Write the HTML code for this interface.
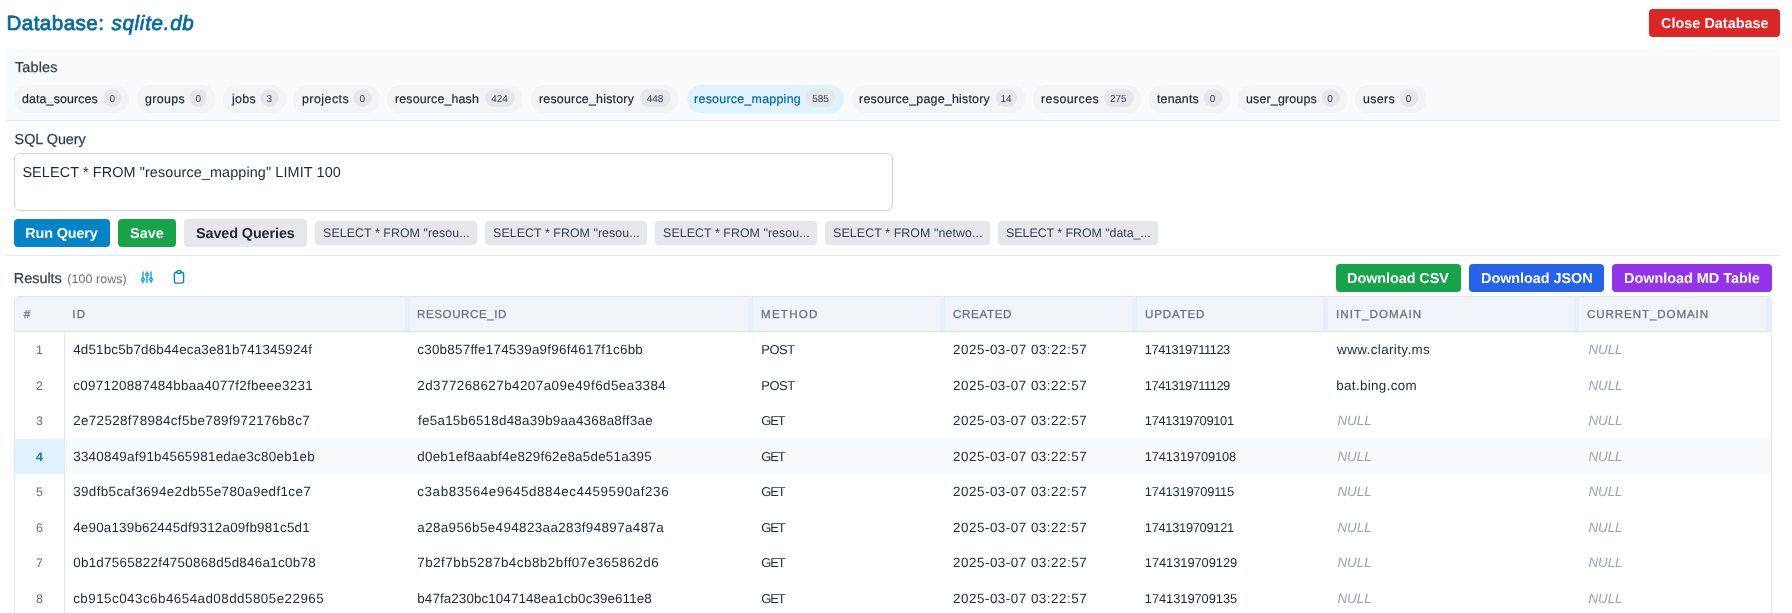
<!DOCTYPE html>
<html lang="en"><head><meta charset="utf-8"><title>Database: sqlite.db</title>
<style>
html,body{margin:0;padding:0;background:#fff}
html{overflow:hidden}
body{width:1792px;height:613px;position:relative;overflow:hidden;font-family:"Liberation Sans",Arial,sans-serif;}
#app{position:absolute;left:0;top:0;width:1792px;height:613px;will-change:transform}
h1,h2,p{margin:0;font-size:inherit;font-weight:inherit}
.t{position:absolute;white-space:pre;line-height:1;display:block;text-rendering:geometricPrecision}
.b{position:absolute;box-sizing:border-box}
.btn{position:absolute;box-sizing:border-box;border-radius:4px}
.chip{position:absolute;box-sizing:border-box;border-radius:14px;background:#f3f4f6}
.chip.on{background:#e0f2fe}
.badge{position:absolute;box-sizing:border-box;border-radius:9px;background:#e5e7eb}
.sv{position:absolute;box-sizing:border-box;border-radius:4px;background:#e5e7eb}
.rz{position:absolute;box-sizing:border-box;background:#e2f1fc;top:0;height:34px;width:5px}
.row{position:absolute;left:0;width:1756px}
.row.sel{background:#f9fafb}
.num{position:absolute;left:0;top:0;width:49px;height:100%}
.row.sel .num{background:#e0f2fe}
svg{position:absolute;overflow:visible}
</style></head><body>
<main id="app">

<header>
<h1><span class="t" id="ttl1" style="left:6.40px;top:14.00px;font-size:20.6px;letter-spacing:0.458px;font-weight:400;-webkit-text-stroke:0.7px #0369a1;color:#0369a1">Database:</span><span class="t" id="ttl2" style="left:111.38px;top:14.00px;font-size:20.6px;letter-spacing:0.714px;font-weight:400;-webkit-text-stroke:0.7px #0369a1;font-style:italic;color:#0369a1">sqlite.db</span></h1>
<div class="btn" style="left:1649px;top:9px;width:131px;height:28px;background:#dc2626"><span class="t" id="close" style="left:12.00px;top:8.01px;font-size:14.4px;letter-spacing:0.032px;font-weight:700;color:#fff">Close Database</span></div>
</header>
<section>
<div class="b" style="left:6px;top:49px;width:1774px;height:72px;background:#f9fafb;border-bottom:1px solid #e5e7eb"><span class="t" id="lbl_tables" style="left:9.00px;top:12.01px;font-size:14.4px;letter-spacing:0.158px;-webkit-text-stroke:0.25px #374151;color:#374151">Tables</span>
<div class="chip" style="left:8px;top:36px;width:115px;height:28px;"><span class="t" id="chip0" style="left:8.00px;top:8.00px;font-size:12.4px;letter-spacing:0.127px;-webkit-text-stroke:0.2px #1f2937;color:#1f2937">data_sources</span><div class="badge" style="left:89px;top:4px;width:18px;height:18px;transform:translateX(0.50px);"><span class="t" id="badge0" style="left:-11.25px;top:6.00px;width:40px;text-align:center;font-size:10px;color:#374151">0</span></div></div>
<div class="chip" style="left:130px;top:36px;width:79px;height:28px;transform:translateX(0.80px);"><span class="t" id="chip1" style="left:8.20px;top:8.00px;font-size:12.4px;letter-spacing:0.382px;-webkit-text-stroke:0.2px #1f2937;color:#1f2937">groups</span><div class="badge" style="left:52.2px;top:4px;width:18px;height:18px;transform:translateX(0.30px);"><span class="t" id="badge1" style="left:-10.90px;top:6.00px;width:40px;text-align:center;font-size:10px;color:#374151">0</span></div></div>
<div class="chip" style="left:217px;top:36px;width:63px;height:28px;"><span class="t" id="chip2" style="left:8.90px;top:8.00px;font-size:12.4px;letter-spacing:0.355px;-webkit-text-stroke:0.2px #1f2937;color:#1f2937">jobs</span><div class="badge" style="left:37px;top:4px;width:18px;height:18px;transform:translateX(0.50px);"><span class="t" id="badge2" style="left:-11.25px;top:6.00px;width:40px;text-align:center;font-size:10px;color:#374151">3</span></div></div>
<div class="chip" style="left:287px;top:36px;width:86.5px;height:28px;"><span class="t" id="chip3" style="left:9.00px;top:8.00px;font-size:12.4px;letter-spacing:0.473px;-webkit-text-stroke:0.2px #1f2937;color:#1f2937">projects</span><div class="badge" style="left:60px;top:4px;width:18px;height:18px;transform:translateX(0.50px);"><span class="t" id="badge3" style="left:-11.25px;top:6.00px;width:40px;text-align:center;font-size:10px;color:#374151">0</span></div></div>
<div class="chip" style="left:380px;top:36px;width:136px;height:28px;transform:translateX(0.50px);"><span class="t" id="chip4" style="left:8.50px;top:8.00px;font-size:12.4px;letter-spacing:0.153px;-webkit-text-stroke:0.2px #1f2937;color:#1f2937">resource_hash</span><div class="badge" style="left:97.5px;top:4px;width:30px;height:18px;transform:translateX(0.50px);"><span class="t" id="badge4" style="left:-5.00px;top:6.00px;width:40px;text-align:center;font-size:10px;color:#374151">424</span></div></div>
<div class="chip" style="left:524px;top:36px;width:148px;height:28px;transform:translateX(0.50px);"><span class="t" id="chip5" style="left:8.50px;top:8.00px;font-size:12.4px;letter-spacing:0.220px;-webkit-text-stroke:0.2px #1f2937;color:#1f2937">resource_history</span><div class="badge" style="left:108.5px;top:4px;width:31px;height:18px;transform:translateX(0.50px);"><span class="t" id="badge5" style="left:-4.50px;top:6.00px;width:40px;text-align:center;font-size:10px;color:#374151">448</span></div></div>
<div class="chip on" style="left:681px;top:36px;width:157px;height:28px;"><span class="t" id="chip6" style="left:7.10px;top:8.00px;font-size:12.4px;letter-spacing:0.264px;-webkit-text-stroke:0.2px #0369a1;color:#0369a1">resource_mapping</span><div class="badge" style="left:118px;top:4px;width:30px;height:18px;transform:translateX(0.50px);"><span class="t" id="badge6" style="left:-5.00px;top:6.00px;width:40px;text-align:center;font-size:10px;color:#374151">585</span></div></div>
<div class="chip" style="left:845px;top:36px;width:174px;height:28px;transform:translateX(0.50px);"><span class="t" id="chip7" style="left:7.60px;top:8.00px;font-size:12.4px;letter-spacing:0.232px;-webkit-text-stroke:0.2px #1f2937;color:#1f2937">resource_page_history</span><div class="badge" style="left:143.5px;top:4px;width:21px;height:18px;transform:translateX(0.50px);"><span class="t" id="badge7" style="left:-9.50px;top:6.00px;width:40px;text-align:center;font-size:10px;color:#374151">14</span></div></div>
<div class="chip" style="left:1026px;top:36px;width:109px;height:28px;transform:translateX(0.50px);"><span class="t" id="chip8" style="left:8.60px;top:8.00px;font-size:12.4px;letter-spacing:0.399px;-webkit-text-stroke:0.2px #1f2937;color:#1f2937">resources</span><div class="badge" style="left:70.5px;top:4px;width:30px;height:18px;transform:translateX(0.50px);"><span class="t" id="badge8" style="left:-5.25px;top:6.00px;width:40px;text-align:center;font-size:10px;color:#374151">275</span></div></div>
<div class="chip" style="left:1142px;top:36px;width:82px;height:28px;transform:translateX(0.50px);"><span class="t" id="chip9" style="left:8.40px;top:8.00px;font-size:12.4px;letter-spacing:0.207px;-webkit-text-stroke:0.2px #1f2937;color:#1f2937">tenants</span><div class="badge" style="left:54.5px;top:4px;width:19px;height:18px;"><span class="t" id="badge9" style="left:-10.50px;top:6.00px;width:40px;text-align:center;font-size:10px;color:#374151">0</span></div></div>
<div class="chip" style="left:1231px;top:36px;width:110px;height:28px;transform:translateX(0.50px);"><span class="t" id="chip10" style="left:8.50px;top:8.00px;font-size:12.4px;letter-spacing:0.181px;-webkit-text-stroke:0.2px #1f2937;color:#1f2937">user_groups</span><div class="badge" style="left:83.5px;top:4px;width:18px;height:18px;"><span class="t" id="badge10" style="left:-11.00px;top:6.00px;width:40px;text-align:center;font-size:10px;color:#374151">0</span></div></div>
<div class="chip" style="left:1348px;top:36px;width:72px;height:28px;transform:translateX(0.50px);"><span class="t" id="chip11" style="left:8.60px;top:8.00px;font-size:12.4px;letter-spacing:0.347px;-webkit-text-stroke:0.2px #1f2937;color:#1f2937">users</span><div class="badge" style="left:44.5px;top:4px;width:19px;height:18px;"><span class="t" id="badge11" style="left:-10.50px;top:6.00px;width:40px;text-align:center;font-size:10px;color:#374151">0</span></div></div></div>
</section>
<section>
<span class="t" id="lbl_sql" style="left:14.60px;top:133.01px;font-size:14.4px;letter-spacing:-0.032px;-webkit-text-stroke:0.25px #374151;color:#374151">SQL Query</span>
<div class="b" style="left:14px;top:153px;width:879px;height:58px;background:#fff;border:1px solid #d1d5db;border-radius:6px"><span class="t" id="ta" style="left:7.40px;top:12.01px;font-size:14.4px;letter-spacing:0.116px;color:#1f2937">SELECT * FROM &quot;resource_mapping&quot; LIMIT 100</span></div>
<div class="btn" style="left:14px;top:219px;width:96px;height:28px;background:#0284c7"><span class="t" id="b_run" style="left:11.20px;top:8.01px;font-size:14.4px;letter-spacing:-0.120px;font-weight:700;color:#fff">Run Query</span></div>
<div class="btn" style="left:118px;top:219px;width:58px;height:28px;background:#16a34a"><span class="t" id="b_save" style="left:12.00px;top:8.01px;font-size:14.4px;letter-spacing:0.064px;font-weight:700;color:#fff">Save</span></div>
<div class="btn" style="left:184px;top:219px;width:123px;height:28px;background:#e5e7eb"><span class="t" id="b_saved" style="left:12.00px;top:8.01px;font-size:14.4px;letter-spacing:-0.100px;font-weight:700;color:#1f2937">Saved Queries</span></div>
<div class="sv" style="left:315px;top:221px;width:162px;height:24px;"><span class="t" id="sv0" style="left:8.10px;top:6.00px;font-size:12.4px;letter-spacing:0.053px;color:#374151">SELECT * FROM &quot;resou...</span></div>
<div class="sv" style="left:485px;top:221px;width:162px;height:24px;"><span class="t" id="sv1" style="left:8.10px;top:6.00px;font-size:12.4px;letter-spacing:0.053px;color:#374151">SELECT * FROM &quot;resou...</span></div>
<div class="sv" style="left:655px;top:221px;width:162px;height:24px;"><span class="t" id="sv2" style="left:8.10px;top:6.00px;font-size:12.4px;letter-spacing:0.053px;color:#374151">SELECT * FROM &quot;resou...</span></div>
<div class="sv" style="left:825px;top:221px;width:165px;height:24px;"><span class="t" id="sv3" style="left:8.10px;top:6.00px;font-size:12.4px;letter-spacing:0.095px;color:#374151">SELECT * FROM &quot;netwo...</span></div>
<div class="sv" style="left:998px;top:221px;width:160px;height:24px;"><span class="t" id="sv4" style="left:8.10px;top:6.00px;font-size:12.4px;letter-spacing:-0.038px;color:#374151">SELECT * FROM &quot;data_...</span></div>
<div class="b" style="left:6px;top:255px;width:1774px;height:1px;background:#e5e7eb"></div>
</section>
<section>
<h2><span class="t" id="res" style="left:13.80px;top:272.01px;font-size:14.4px;letter-spacing:-0.000px;-webkit-text-stroke:0.25px #374151;color:#374151">Results</span><span class="t" id="rows" style="left:67.20px;top:273.00px;font-size:12.4px;letter-spacing:0.108px;color:#6b7280">(100 rows)</span></h2>
<svg style="left:139px;top:269px" width="16" height="16" viewBox="0 0 16 16" fill="none" stroke="#0ea5e9" stroke-width="1.4" stroke-linecap="round"><path d="M4 2.9V13.4M8 2.9V13.4M12 2.9V13.4"/><circle cx="4" cy="10.5" r="1.3" fill="#fff"/><circle cx="8" cy="5.2" r="1.3" fill="#fff"/><circle cx="12" cy="10.5" r="1.3" fill="#fff"/></svg>
<svg style="left:171px;top:269px" width="16" height="16" viewBox="0 0 16 16" fill="none" stroke="#0284c7" stroke-width="1.4" stroke-linejoin="round"><rect x="3.4" y="3.3" width="9.2" height="10.8" rx="1.8"/><ellipse cx="8" cy="3.05" rx="2.1" ry="1.5" fill="#fff"/></svg>
<div class="btn" style="left:1336px;top:264px;width:125px;height:28px;background:#16a34a"><span class="t" id="d_csv" style="left:11.10px;top:8.01px;font-size:14.4px;letter-spacing:-0.059px;font-weight:700;color:#fff">Download CSV</span></div>
<div class="btn" style="left:1469px;top:264px;width:135px;height:28px;background:#2563eb"><span class="t" id="d_json" style="left:12.10px;top:8.01px;font-size:14.4px;letter-spacing:-0.036px;font-weight:700;color:#fff">Download JSON</span></div>
<div class="btn" style="left:1612px;top:264px;width:160px;height:28px;background:#9333ea"><span class="t" id="d_md" style="left:12.10px;top:8.01px;font-size:14.4px;letter-spacing:0.003px;font-weight:700;color:#fff">Download MD Table</span></div>
<div class="b" style="left:14px;top:296px;width:1758px;height:344px;border:1px solid #e5e7eb;border-radius:4px;background:#fff;overflow:hidden"><div class="b" style="left:0;top:0;width:1756px;height:35px;background:#f1f5f9;border-bottom:1px solid #cfe8f7"><span class="t" id="h0" style="left:8.80px;top:12.01px;font-size:11.6px;letter-spacing:0.000px;color:#6b7280;font-weight:400;-webkit-text-stroke:0.3px #6b7280">#</span><span class="t" id="h1" style="left:57.20px;top:12.01px;font-size:11.6px;letter-spacing:1.288px;color:#6b7280;font-weight:400;-webkit-text-stroke:0.3px #6b7280">ID</span><span class="t" id="h2" style="left:402.10px;top:12.01px;font-size:11.6px;letter-spacing:0.549px;color:#6b7280;font-weight:400;-webkit-text-stroke:0.3px #6b7280">RESOURCE_ID</span><span class="t" id="h3" style="left:746.10px;top:12.01px;font-size:11.6px;letter-spacing:1.189px;color:#6b7280;font-weight:400;-webkit-text-stroke:0.3px #6b7280">METHOD</span><span class="t" id="h4" style="left:938.00px;top:12.01px;font-size:11.6px;letter-spacing:0.657px;color:#6b7280;font-weight:400;-webkit-text-stroke:0.3px #6b7280">CREATED</span><span class="t" id="h5" style="left:1130.00px;top:12.01px;font-size:11.6px;letter-spacing:0.824px;color:#6b7280;font-weight:400;-webkit-text-stroke:0.3px #6b7280">UPDATED</span><span class="t" id="h6" style="left:1321.10px;top:12.01px;font-size:11.6px;letter-spacing:1.029px;color:#6b7280;font-weight:400;-webkit-text-stroke:0.3px #6b7280">INIT_DOMAIN</span><span class="t" id="h7" style="left:1572.10px;top:12.01px;font-size:11.6px;letter-spacing:0.884px;color:#6b7280;font-weight:400;-webkit-text-stroke:0.3px #6b7280">CURRENT_DOMAIN</span><div class="rz" style="left:390px"></div><div class="rz" style="left:733px"></div><div class="rz" style="left:925px"></div><div class="rz" style="left:1117px"></div><div class="rz" style="left:1308px"></div><div class="rz" style="left:1559px"></div><div class="rz" style="left:1751px"></div></div>
<div class="row" style="top:35px;height:36px"><div class="num"><span class="t" id="n0" style="left:4.50px;top:12.00px;width:40px;text-align:center;font-size:12.4px;color:#6b7280">1</span></div><span class="t" id="r0a" style="left:58.20px;top:11.00px;font-size:13.4px;letter-spacing:0.181px;color:#1f2937">4d51bc5b7d6b44eca3e81b741345924f</span><span class="t" id="r0b" style="left:402.30px;top:11.00px;font-size:13.4px;letter-spacing:0.244px;color:#1f2937">c30b857ffe174539a9f96f4617f1c6bb</span><span class="t" id="r0c" style="left:746.30px;top:12.00px;font-size:12.9px;letter-spacing:-0.456px;color:#1f2937">POST</span><span class="t" id="r0d" style="left:938.10px;top:11.00px;font-size:13.4px;letter-spacing:0.509px;color:#1f2937">2025-03-07 03:22:57</span><span class="t" id="r0e" style="left:1129.80px;top:12.00px;font-size:12.9px;letter-spacing:-0.486px;color:#1f2937">1741319711123</span><span class="t" id="r0f" style="left:1322.10px;top:11.00px;font-size:13.4px;letter-spacing:0.396px;color:#1f2937">www.clarity.ms</span><span class="t" id="r0g" style="left:1573.40px;top:11.00px;font-size:13.4px;letter-spacing:-0.050px;color:#9ca3af;font-style:italic">NULL</span></div>
<div class="row" style="top:71px;height:35px"><div class="num"><span class="t" id="n1" style="left:4.50px;top:12.00px;width:40px;text-align:center;font-size:12.4px;color:#6b7280">2</span></div><span class="t" id="r1a" style="left:58.20px;top:11.00px;font-size:13.4px;letter-spacing:0.303px;color:#1f2937">c097120887484bbaa4077f2fbeee3231</span><span class="t" id="r1b" style="left:402.30px;top:11.00px;font-size:13.4px;letter-spacing:0.449px;color:#1f2937">2d377268627b4207a09e49f6d5ea3384</span><span class="t" id="r1c" style="left:746.30px;top:12.00px;font-size:12.9px;letter-spacing:-0.456px;color:#1f2937">POST</span><span class="t" id="r1d" style="left:938.10px;top:11.00px;font-size:13.4px;letter-spacing:0.509px;color:#1f2937">2025-03-07 03:22:57</span><span class="t" id="r1e" style="left:1129.80px;top:12.00px;font-size:12.9px;letter-spacing:-0.486px;color:#1f2937">1741319711129</span><span class="t" id="r1f" style="left:1321.30px;top:11.00px;font-size:13.4px;letter-spacing:0.339px;color:#1f2937">bat.bing.com</span><span class="t" id="r1g" style="left:1573.40px;top:11.00px;font-size:13.4px;letter-spacing:-0.050px;color:#9ca3af;font-style:italic">NULL</span></div>
<div class="row" style="top:106px;height:36px"><div class="num"><span class="t" id="n2" style="left:4.50px;top:12.00px;width:40px;text-align:center;font-size:12.4px;color:#6b7280">3</span></div><span class="t" id="r2a" style="left:58.20px;top:11.00px;font-size:13.4px;letter-spacing:0.350px;color:#1f2937">2e72528f78984cf5be789f972176b8c7</span><span class="t" id="r2b" style="left:403.10px;top:11.00px;font-size:13.4px;letter-spacing:0.245px;color:#1f2937">fe5a15b6518d48a39b9aa4368a8ff3ae</span><span class="t" id="r2c" style="left:746.30px;top:12.00px;font-size:12.9px;letter-spacing:-1.116px;color:#1f2937">GET</span><span class="t" id="r2d" style="left:938.10px;top:11.00px;font-size:13.4px;letter-spacing:0.509px;color:#1f2937">2025-03-07 03:22:57</span><span class="t" id="r2e" style="left:1129.80px;top:12.00px;font-size:12.9px;letter-spacing:-0.327px;color:#1f2937">1741319709101</span><span class="t" id="r2f" style="left:1322.40px;top:11.00px;font-size:13.4px;letter-spacing:-0.017px;color:#9ca3af;font-style:italic">NULL</span><span class="t" id="r2g" style="left:1573.40px;top:11.00px;font-size:13.4px;letter-spacing:-0.050px;color:#9ca3af;font-style:italic">NULL</span></div>
<div class="row sel" style="top:142px;height:35px"><div class="num"><span class="t" id="n3" style="left:4.50px;top:12.00px;width:40px;text-align:center;font-size:12.4px;color:#0284c7;font-weight:700">4</span></div><span class="t" id="r3a" style="left:58.20px;top:11.00px;font-size:13.4px;letter-spacing:0.247px;color:#1f2937">3340849af91b4565981edae3c80eb1eb</span><span class="t" id="r3b" style="left:402.30px;top:11.00px;font-size:13.4px;letter-spacing:0.234px;color:#1f2937">d0eb1ef8aabf4e829f62e8a5de51a395</span><span class="t" id="r3c" style="left:746.30px;top:12.00px;font-size:12.9px;letter-spacing:-1.116px;color:#1f2937">GET</span><span class="t" id="r3d" style="left:938.10px;top:11.00px;font-size:13.4px;letter-spacing:0.509px;color:#1f2937">2025-03-07 03:22:57</span><span class="t" id="r3e" style="left:1129.80px;top:12.00px;font-size:12.9px;letter-spacing:-0.152px;color:#1f2937">1741319709108</span><span class="t" id="r3f" style="left:1322.40px;top:11.00px;font-size:13.4px;letter-spacing:-0.017px;color:#9ca3af;font-style:italic">NULL</span><span class="t" id="r3g" style="left:1573.40px;top:11.00px;font-size:13.4px;letter-spacing:-0.050px;color:#9ca3af;font-style:italic">NULL</span></div>
<div class="row" style="top:177px;height:36px"><div class="num"><span class="t" id="n4" style="left:4.50px;top:12.00px;width:40px;text-align:center;font-size:12.4px;color:#6b7280">5</span></div><span class="t" id="r4a" style="left:58.20px;top:11.00px;font-size:13.4px;letter-spacing:0.383px;color:#1f2937">39dfb5caf3694e2db55e780a9edf1ce7</span><span class="t" id="r4b" style="left:402.30px;top:11.00px;font-size:13.4px;letter-spacing:0.587px;color:#1f2937">c3ab83564e9645d884ec4459590af236</span><span class="t" id="r4c" style="left:746.30px;top:12.00px;font-size:12.9px;letter-spacing:-1.116px;color:#1f2937">GET</span><span class="t" id="r4d" style="left:938.10px;top:11.00px;font-size:13.4px;letter-spacing:0.509px;color:#1f2937">2025-03-07 03:22:57</span><span class="t" id="r4e" style="left:1129.80px;top:12.00px;font-size:12.9px;letter-spacing:-0.236px;color:#1f2937">1741319709115</span><span class="t" id="r4f" style="left:1322.40px;top:11.00px;font-size:13.4px;letter-spacing:-0.017px;color:#9ca3af;font-style:italic">NULL</span><span class="t" id="r4g" style="left:1573.40px;top:11.00px;font-size:13.4px;letter-spacing:-0.050px;color:#9ca3af;font-style:italic">NULL</span></div>
<div class="row" style="top:213px;height:35px"><div class="num"><span class="t" id="n5" style="left:4.50px;top:12.00px;width:40px;text-align:center;font-size:12.4px;color:#6b7280">6</span></div><span class="t" id="r5a" style="left:58.20px;top:11.00px;font-size:13.4px;letter-spacing:0.206px;color:#1f2937">4e90a139b62445df9312a09fb981c5d1</span><span class="t" id="r5b" style="left:402.30px;top:11.00px;font-size:13.4px;letter-spacing:0.384px;color:#1f2937">a28a956b5e494823aa283f94897a487a</span><span class="t" id="r5c" style="left:746.30px;top:12.00px;font-size:12.9px;letter-spacing:-1.116px;color:#1f2937">GET</span><span class="t" id="r5d" style="left:938.10px;top:11.00px;font-size:13.4px;letter-spacing:0.509px;color:#1f2937">2025-03-07 03:22:57</span><span class="t" id="r5e" style="left:1129.80px;top:12.00px;font-size:12.9px;letter-spacing:-0.319px;color:#1f2937">1741319709121</span><span class="t" id="r5f" style="left:1322.40px;top:11.00px;font-size:13.4px;letter-spacing:-0.017px;color:#9ca3af;font-style:italic">NULL</span><span class="t" id="r5g" style="left:1573.40px;top:11.00px;font-size:13.4px;letter-spacing:-0.050px;color:#9ca3af;font-style:italic">NULL</span></div>
<div class="row" style="top:248px;height:36px"><div class="num"><span class="t" id="n6" style="left:4.50px;top:12.00px;width:40px;text-align:center;font-size:12.4px;color:#6b7280">7</span></div><span class="t" id="r6a" style="left:58.20px;top:11.00px;font-size:13.4px;letter-spacing:0.276px;color:#1f2937">0b1d7565822f4750868d5d846a1c0b78</span><span class="t" id="r6b" style="left:402.30px;top:11.00px;font-size:13.4px;letter-spacing:0.492px;color:#1f2937">7b2f7bb5287b4cb8b2bff07e365862d6</span><span class="t" id="r6c" style="left:746.30px;top:12.00px;font-size:12.9px;letter-spacing:-1.116px;color:#1f2937">GET</span><span class="t" id="r6d" style="left:938.10px;top:11.00px;font-size:13.4px;letter-spacing:0.509px;color:#1f2937">2025-03-07 03:22:57</span><span class="t" id="r6e" style="left:1129.80px;top:12.00px;font-size:12.9px;letter-spacing:-0.069px;color:#1f2937">1741319709129</span><span class="t" id="r6f" style="left:1322.40px;top:11.00px;font-size:13.4px;letter-spacing:-0.017px;color:#9ca3af;font-style:italic">NULL</span><span class="t" id="r6g" style="left:1573.40px;top:11.00px;font-size:13.4px;letter-spacing:-0.050px;color:#9ca3af;font-style:italic">NULL</span></div>
<div class="row" style="top:284px;height:35px"><div class="num"><span class="t" id="n7" style="left:4.50px;top:12.00px;width:40px;text-align:center;font-size:12.4px;color:#6b7280">8</span></div><span class="t" id="r7a" style="left:58.20px;top:11.00px;font-size:13.4px;letter-spacing:0.466px;color:#1f2937">cb915c043c6b4654ad08dd5805e22965</span><span class="t" id="r7b" style="left:402.30px;top:11.00px;font-size:13.4px;letter-spacing:0.099px;color:#1f2937">b47fa230bc1047148ea1cb0c39e611e8</span><span class="t" id="r7c" style="left:746.30px;top:12.00px;font-size:12.9px;letter-spacing:-1.116px;color:#1f2937">GET</span><span class="t" id="r7d" style="left:938.10px;top:11.00px;font-size:13.4px;letter-spacing:0.509px;color:#1f2937">2025-03-07 03:22:57</span><span class="t" id="r7e" style="left:1129.80px;top:12.00px;font-size:12.9px;letter-spacing:-0.069px;color:#1f2937">1741319709135</span><span class="t" id="r7f" style="left:1322.40px;top:11.00px;font-size:13.4px;letter-spacing:-0.017px;color:#9ca3af;font-style:italic">NULL</span><span class="t" id="r7g" style="left:1573.40px;top:11.00px;font-size:13.4px;letter-spacing:-0.050px;color:#9ca3af;font-style:italic">NULL</span></div>
<div class="b" style="left:49px;top:35px;width:1px;height:300px;background:#e5e7eb"></div></div>
</section>
</main></body></html>
